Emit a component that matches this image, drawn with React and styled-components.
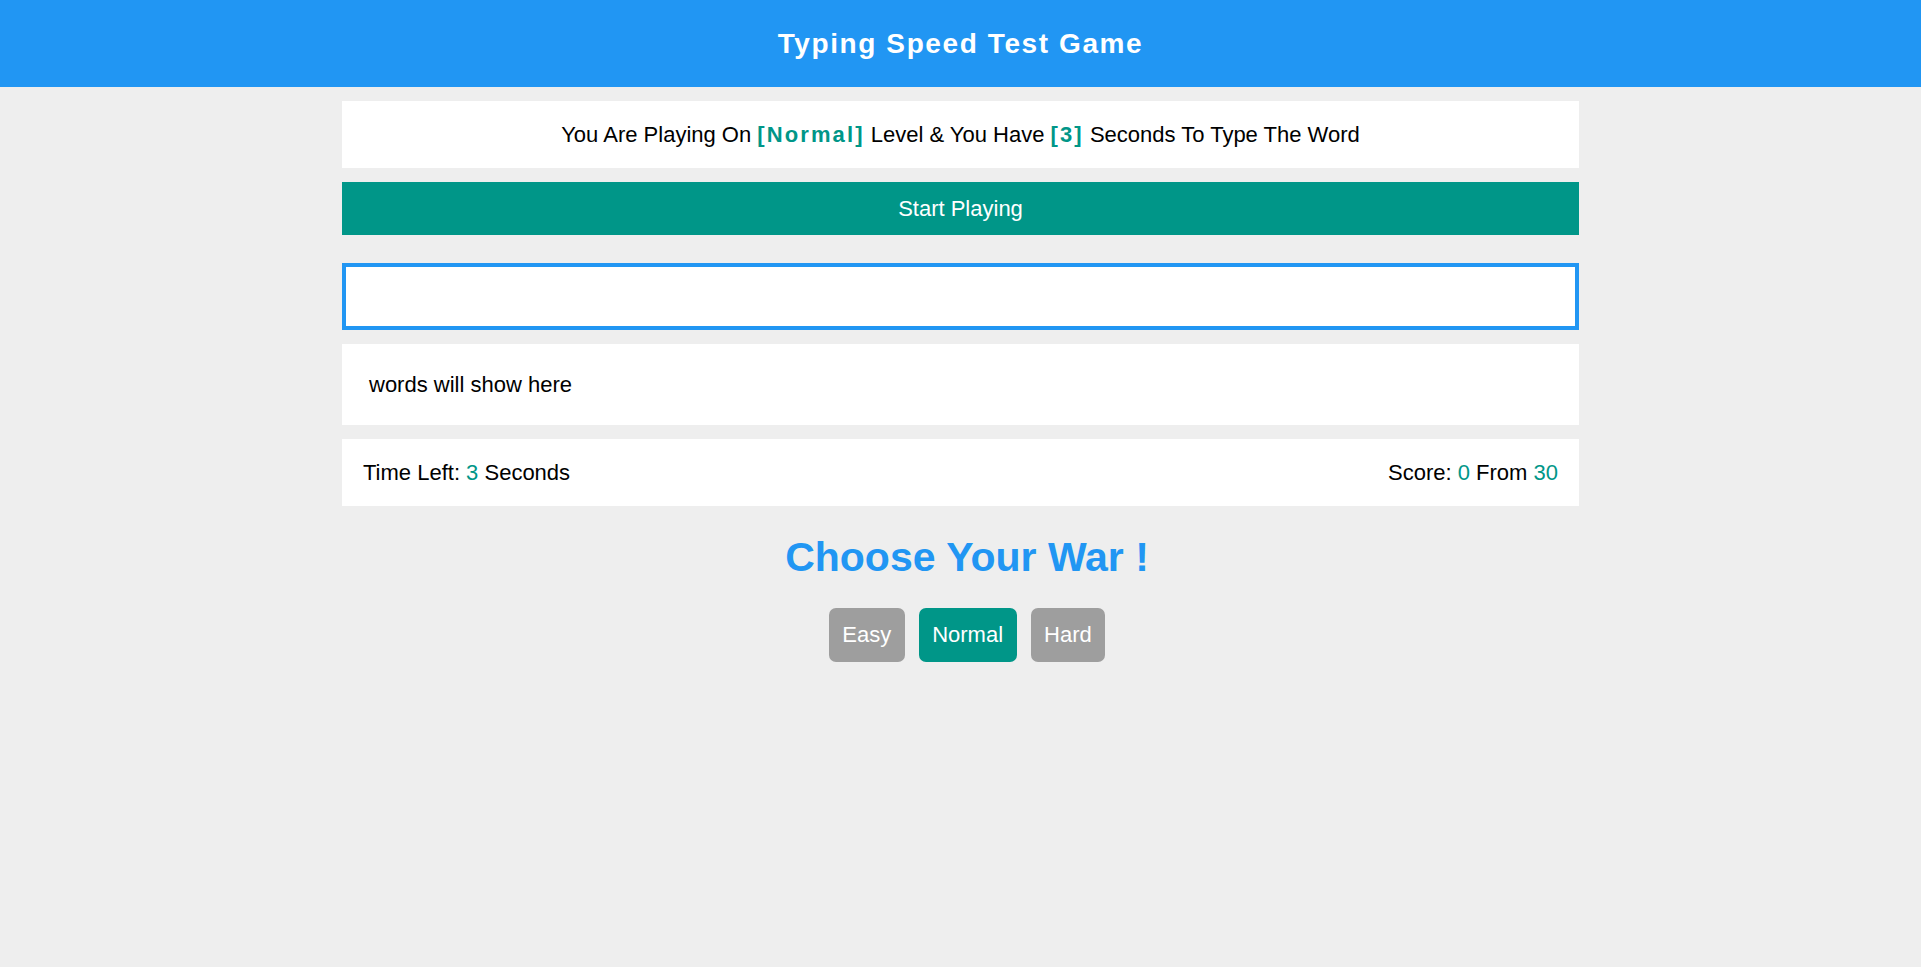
import { useState } from "react";
import styled, { createGlobalStyle } from "styled-components";

const GlobalStyle = createGlobalStyle`
  * {
    box-sizing: border-box;
  }

  body {
    margin: 0;
    background-color: #eeeeee;
    font-family: "Liberation Sans", Arial, sans-serif;
  }
`;

const Header = styled.h1`
  margin: 0;
  padding: 25px;
  background-color: #2196f3;
  color: #fff;
  text-align: center;
  font-size: 28px;
  line-height: 37px;
  letter-spacing: 1.6px;
`;

const Game = styled.div`
  width: 1237px;
  margin: 14px auto 0;
  display: flex;
  flex-direction: column;
  gap: 14px;
`;

const Message = styled.div`
  background-color: #fff;
  padding: 21px;
  text-align: center;
  font-size: 22px;
  line-height: 25px;
  color: #000;
`;

const Highlight = styled.span`
  color: #009688;
  font-weight: bold;
  letter-spacing: 2.1px;
`;

const StartButton = styled.div`
  background-color: #009688;
  color: #fff;
  text-align: center;
  font-size: 22px;
  line-height: 25px;
  padding: 14px;
  cursor: pointer;
`;

const WordInput = styled.input`
  display: block;
  width: 100%;
  height: 67px;
  margin-top: 14px;
  border: 4px solid #2196f3;
  background-color: #fff;
  font-size: 22px;
  padding: 0 20px;
  outline: none;
  font-family: inherit;
`;

const TheWord = styled.div`
  background-color: #fff;
  padding: 28px 27px;
  font-size: 22px;
  line-height: 25px;
  color: #000;
`;

const Control = styled.div`
  background-color: #fff;
  display: flex;
  justify-content: space-between;
  align-items: center;
  height: 67px;
  padding: 0 21px;
  font-size: 22px;
  color: #000;
`;

const Num = styled.span`
  color: #009688;
`;

const Levels = styled.div`
  display: flex;
  flex-direction: column;
  align-items: center;
  padding-left: 13px;
`;

const Title = styled.h2`
  margin: 14px 0 27px;
  color: #2196f3;
  font-size: 41px;
  line-height: 47px;
  font-weight: bold;
`;

const LevelRow = styled.div`
  display: flex;
  gap: 14px;
`;

const LevelButton = styled.button`
  border: none;
  border-radius: 7px;
  padding: 0 13.5px;
  height: 54px;
  font-family: inherit;
  font-size: 22px;
  color: #fff;
  cursor: pointer;
  background-color: ${(p) => (p.$active ? "#009688" : "#9e9e9e")};
`;

const levels = { Easy: 5, Normal: 3, Hard: 2 };

const App = () => {
  const [level, setLevel] = useState("Normal");
  const seconds = levels[level];

  return (
    <>
      <GlobalStyle />
      <Header>Typing Speed Test Game</Header>
      <Game>
        <Message>
          You Are Playing On <Highlight>[{level}]</Highlight> Level &amp; You Have{" "}
          <Highlight>[{seconds}]</Highlight> Seconds To Type The Word
        </Message>
        <StartButton>Start Playing</StartButton>
        <WordInput type="text" />
        <TheWord>words will show here</TheWord>
        <Control>
          <span>
            Time Left: <Num>{seconds}</Num> Seconds
          </span>
          <span>
            Score: <Num>0</Num> From <Num>30</Num>
          </span>
        </Control>
        <Levels>
          <Title>Choose Your War !</Title>
          <LevelRow>
            {Object.keys(levels).map((name) => (
              <LevelButton
                key={name}
                $active={name === level}
                onClick={() => setLevel(name)}
              >
                {name}
              </LevelButton>
            ))}
          </LevelRow>
        </Levels>
      </Game>
    </>
  );
};

export default App;
